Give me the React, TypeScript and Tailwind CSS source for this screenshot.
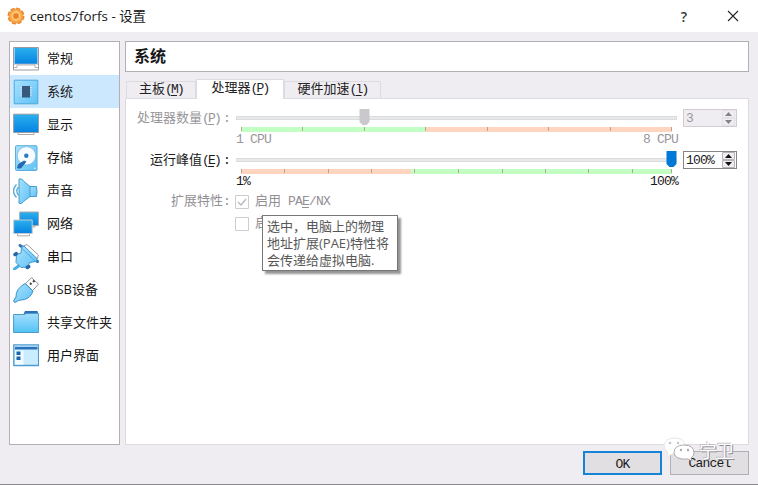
import React from 'react';

const UI = "font-['Open_Sans','Noto_Sans_CJK_SC',sans-serif]";
const MONO = "font-['Liberation_Mono','Noto_Sans_CJK_SC',monospace]";

function Defs() {
  return (
    <svg className="absolute h-0 w-0">
      <defs>
        <linearGradient id="screen" x1="0" y1="0" x2="0" y2="1">
          <stop offset="0" stopColor="#2bb0ee" />
          <stop offset="1" stopColor="#0583e2" />
        </linearGradient>
        <linearGradient id="pale" x1="0" y1="0" x2="1" y2="1">
          <stop offset="0" stopColor="#a8e1fd" />
          <stop offset="1" stopColor="#5fc2f6" />
        </linearGradient>
        <linearGradient id="folder" x1="0" y1="0" x2="0" y2="1">
          <stop offset="0" stopColor="#a5dffc" />
          <stop offset="1" stopColor="#52c3f5" />
        </linearGradient>
      </defs>
    </svg>
  );
}

const icons: Record<string, React.ReactNode> = {
  general: (
    <>
      <path d="M.5 1.5h25v22.5H.5z" fill="#fff" stroke="#9b9a9f" />
      <path d="M1.5 2h23v16h-23z" fill="url(#screen)" />
      <path d="M1 18.2h24" stroke="#c4c2c6" />
      <path d="M1 21.5h3v-2.5h18v2.5h3" fill="none" stroke="#b5b3b7" />
    </>
  ),
  system: (
    <>
      <path d="M1.2 1.2h23.6v23.6H1.2z" fill="url(#pale)" stroke="#4ba9dd" />
      <path d="M7 8.5h12M7 11h12M7 13.5h12M7 16h12" stroke="#d0e0ea" />
      <path d="M9 7h8v11.5H9z" fill="#39597c" />
    </>
  ),
  display: (
    <>
      <path d="M5 20.5h16v2H5z" fill="#fff" stroke="#aaa" />
      <path d="M.6 2.2h25v18.3H.6z" fill="url(#screen)" stroke="#9b9ba0" />
    </>
  ),
  storage: (
    <>
      <rect x="2.5" y=".7" width="21.5" height="24.8" rx="1" fill="url(#pale)" stroke="#5caddb" />
      <circle cx="13.5" cy="10.8" r="9.2" fill="#f8fcff" stroke="#7fbce0" strokeWidth=".8" />
      <circle cx="13.3" cy="10.8" r="2.2" fill="#277bc2" />
      <path d="m4.5 23 1-3.5 5.5-3.5 1.8.8-5 6.2z" fill="#226ab0" stroke="#226ab0" strokeLinejoin="round" />
      <circle cx="22" cy="23.3" r=".8" fill="#fff" />
    </>
  ),
  audio: (
    <>
      <path d="M3.5 6.5q-6 6.5 0 13M5.5 9q-3.5 4 0 8.5" fill="none" stroke="#56a9d8" strokeWidth="1.3" />
      <path d="M16 8.5h7.5q1 5 0 10H16z" fill="url(#pale)" stroke="#479dcd" />
      <path d="M6 1q3-1 4.5 2L17 8.5v10l-6.500 5q-1.500 3-4.500 1.800z" fill="url(#pale)" stroke="#479dcd" strokeLinejoin="round" />
    </>
  ),
  network: (
    <>
      <path d="M10 14h12v2H10z" fill="#fff" stroke="#aaa" />
      <path d="M6.700 1h18.800v13.500H6.700z" fill="url(#screen)" stroke="#a8aaad" />
      <path d="M4.500 22.500h12v2.300h-12z" fill="#fff" stroke="#aaa" />
      <path d="M.7 9h18.500v13.500H.7z" fill="url(#screen)" stroke="#c5c9cc" />
    </>
  ),
  serial: (
    <>
      <path d="m10.500 2 3.500-1.500L25.500 11l-1.500 4z" fill="#fff" stroke="#9e9da1" />
      <path d="m7 21-5.500 4" stroke="#4baee8" strokeWidth="3" strokeLinecap="round" />
      <path d="m7 1.500 3 2M22 15.500l2.500 2" stroke="#3579bd" strokeWidth="3" strokeLinecap="round" />
      <path d="M8.500 3.500 11 2l13 12.500-1 3-6.500 1-1.500 4.500-7 .500-5-5 .500-8L8 9z" fill="url(#pale)" stroke="#3e9bd1" strokeLinejoin="round" />
      <path d="m8.500 4 14 13.500" stroke="#4ba8df" />
      <path d="m2 10.500 1.200-.8M14.300 23.500l1.400-1" stroke="#2865a7" strokeWidth="3.500" strokeLinecap="round" />
    </>
  ),
  usb: (
    <>
      <path d="m18.500.7 7 6.500-6 6.500-7-7z" fill="#fff" stroke="#8c8c92" />
      <path d="m17 6 1.500 1.500m1.500-4 1.500 1.500" stroke="#444" strokeWidth="1.800" />
      <path d="m12 6.500 8 7.500q-2.500 7-8.500 8.500-4 .5-6 1L2 25.500q-2-.5-1-2.500l2-3q-.5-8 9-13.500z" fill="url(#pale)" stroke="#3c91c7" />
    </>
  ),
  shared: (
    <>
      <path d="M10 5l2-4h12.500l1 4z" fill="#2b6fba" />
      <path d="M.6 4.500h10.500l2-1h12.500v19H.6z" fill="url(#folder)" stroke="#4b9bc6" />
    </>
  ),
  interface: (
    <>
      <path d="M.8 1.800h24.800v20.700H.8z" fill="#c9edff" stroke="#4f9bd0" strokeWidth="1.300" />
      <path d="M2 3.800h22.500v2.700H2z" fill="#2b72bc" />
      <path d="M2 7.500h8.500v14H2z" fill="#f2fbff" />
      <path d="M3.500 8.500h4v3.500h-4zm0 5h4V17h-4z" fill="#1864ad" />
    </>
  ),
};

const items = [
  ['general', '常规'],
  ['system', '系统'],
  ['display', '显示'],
  ['storage', '存储'],
  ['audio', '声音'],
  ['network', '网络'],
  ['serial', '串口'],
  ['usb', 'USB设备'],
  ['shared', '共享文件夹'],
  ['interface', '用户界面'],
];

function Sidebar() {
  return (
    <nav className={`h-[404px] w-[111px] shrink-0 border border-[#b2b0b5] bg-white text-[13px] text-[#161616] ${UI}`}>
      {items.map(([id, label]) => (
        <div key={id} className={`flex h-[33px] items-center pl-[3px] ${id === 'system' ? 'bg-[#cce8ff]' : ''}`}>
          <svg width="26" height="26" viewBox="0 0 26 26" className="shrink-0">{icons[id]}</svg>
          <span className="ml-[8px] whitespace-nowrap pb-[2px] leading-[20px]">{label}</span>
        </div>
      ))}
    </nav>
  );
}

function Latin({ children }: { children: React.ReactNode }) {
  return <span className="text-[13px] tracking-[-0.8px]">{children}</span>;
}

function Mnemonic({ text, letter }: { text: string; letter: string }) {
  return (
    <span className="whitespace-nowrap">
      {text}
      <span className="text-[13px] tracking-[-1.8px]">(<u className="underline-offset-2">{letter}</u>)</span>
    </span>
  );
}

function Slider({ ticks, split, low, high, value, disabled }: {
  ticks: number[]; split: number; low: string; high: string; value: number; disabled?: boolean;
}) {
  return (
    <div className="relative h-[18px] w-[441px]">
      <div className="pt-[7px]">
        <div className="h-[4px] border border-[#dcdcde] bg-[#e7eaea]" />
      </div>
      <svg className="mx-[5px] mt-[7px] block" width="431" height="5">
        <rect width={split} height="5" fill={low} />
        <rect x={split} width={431 - split} height="5" fill={high} />
        {ticks.map((x) => (
          <rect key={x} x={x} width="1" height="4" fill="#b2a69b" />
        ))}
      </svg>
      <svg className="absolute top-0" style={{ left: value }} width="11" height="17">
        <path d="M.5 0h10v13L7.5 16h-4L.5 13z" fill={disabled ? '#cbc8cd' : '#0078d7'} />
      </svg>
    </div>
  );
}

function Spin({ value, disabled }: { value: string; disabled?: boolean }) {
  return (
    <div className={`flex h-[18px] w-[54px] items-center justify-between border pl-[2px] ${disabled ? 'border-[#d0ccd2] bg-[#f0edf2] text-[#9a989c]' : 'border-[#858388] bg-white text-[#222]'}`}>
      <span className="pt-[2px] text-[13px] leading-[16px] tracking-[-0.8px]">{value}</span>
      <svg width="14" height="16" viewBox="0 0 14 16">
        <path d="M.5.5h12v7H.5zm0 8h12v7H.5z" fill="#f0edf2" stroke={disabled ? '#e4e1e6' : '#b6b4b9'} />
        <path d="m6.500 2 3.500 4h-7zm0 12 3.500-4h-7z" fill={disabled ? '#858388' : '#111'} />
      </svg>
    </div>
  );
}

function Check({ checked }: { checked?: boolean }) {
  return (
    <svg width="14" height="14" className="shrink-0">
      <path d="M.5.5h13v13H.5z" fill="#fff" stroke="#ceccd0" />
      {checked && <path d="m3 7 3 3 5-6" fill="none" stroke="#b9b8bc" strokeWidth="1.3" />}
    </svg>
  );
}

function Tabs() {
  return (
    <div className="flex h-[18px] items-end pl-[1px] text-[13px] leading-[16px] text-[#222]">
      <div className="flex h-[17px] w-[70px] items-center justify-center border border-b-0 border-[#dedbe0] bg-[#f0edf2]">
        <Mnemonic text="主板" letter="M" />
      </div>
      <div className="z-10 mb-[-1px] flex h-[20px] w-[88px] items-center justify-center border border-b-0 border-[#dedbe0] bg-white pb-[1px]">
        <Mnemonic text="处理器" letter="P" />
      </div>
      <div className="flex h-[17px] w-[97px] items-center justify-center border border-b-0 border-[#dedbe0] bg-[#f0edf2]">
        <Mnemonic text="硬件加速" letter="l" />
      </div>
    </div>
  );
}

function Range({ from, to }: { from: string; to: string }) {
  return (
    <div className="mt-[4px] flex justify-between text-[13px] leading-[18px] tracking-[-0.8px]">
      <span>{from}</span>
      <span className="mr-[-1px]">{to}</span>
    </div>
  );
}

function Processor() {
  return (
    <section className="h-[347px] border border-[#dedbe0] bg-white pt-[10px]">
      <div className="flex h-[42px] text-[#98969a]">
        <div className="w-[110px] pl-[11px] pt-[1px] text-[13px] leading-[18px]">
          <Mnemonic text="处理器数量" letter="P" /><span className="ml-[3px]">:</span>
        </div>
        <div className="w-[441px]">
          <Slider ticks={[0, 61, 123, 184, 246, 307, 369, 430]} split={185} low="#c2ffc2" high="#ffd5c0" value={123} disabled />
          <Range from="1 CPU" to="8 CPU" />
        </div>
        <div className="ml-[6px]"><Spin value="3" disabled /></div>
      </div>
      <div className="flex h-[42px] text-[#1a1a1a]">
        <div className="w-[110px] pl-[24px] pt-[1px] text-[13px] leading-[18px]">
          <Mnemonic text="运行峰值" letter="E" /><span className="ml-[3px]">:</span>
        </div>
        <div className="w-[441px]">
          <Slider ticks={[0, 43, 87, 130, 173, 217, 261, 304, 347, 391, 430]} split={170} low="#ffd5c0" high="#c2ffc2" value={430} />
          <Range from="1%" to="100%" />
        </div>
        <div className="ml-[6px]"><Spin value="100%" /></div>
      </div>
      <div className="relative text-[13px] text-[#929094]">
        <div className="flex h-[18px] items-center">
          <span className="w-[109px] pl-[45px] leading-[18px]">扩展特性<Latin>:</Latin></span>
          <Check checked />
          <span className="ml-[6px] whitespace-nowrap leading-[18px]">启用<Latin> PA<u className="underline-offset-2">E</u>/NX</Latin></span>
        </div>
        <div className="flex h-[26px] items-center pl-[109px]">
          <Check />
          <span className="ml-[6px] leading-[18px]">启用</span>
        </div>
        <div className={`absolute left-[136px] top-[22px] h-[56px] w-[136px] border border-[#777] bg-white pl-[4px] pt-[2px] text-[13px] leading-[17px] text-[#575757] shadow-[3px_3px_2px_rgba(0,0,0,.42)] ${UI}`}>
          <div className="whitespace-nowrap">选中，电脑上的物理</div>
          <div className="whitespace-nowrap">地址扩展(PAE)特性将</div>
          <div className="whitespace-nowrap">会传递给虚拟电脑.</div>
        </div>
      </div>
    </section>
  );
}

function Watermark() {
  return (
    <div className="absolute left-[80px] top-[-14px] flex items-center">
      <svg width="32" height="26" viewBox="0 0 32 26">
        <path d="m5 15-1 5 5-3q13 0 13-9Q21 1 12 1T1 8q0 5 4 7z" fill="#fff" stroke="#e7e5e8" />
        <path d="M21 8q10 0 10 8 0 3-3 5l1 3-4-2q-13 1-14-6 0-8 10-8z" fill="#fff" stroke="#9a979c" strokeWidth=".8" />
        <circle cx="7" cy="6" r="1.3" fill="#c7c4c8" /><circle cx="15" cy="6" r="1.3" fill="#c7c4c8" />
        <circle cx="18" cy="13" r="1.2" fill="#aaa7ad" /><circle cx="25" cy="13" r="1.2" fill="#aaa7ad" />
      </svg>
      <span className={`ml-[4px] pt-[2px] text-[18px] leading-[24px] text-white [text-shadow:1px_1px_0px_#8f8c92,-1px_-1px_0px_#c4c1c6] ${UI}`}>宁卫</span>
    </div>
  );
}

export default function App() {
  return (
    <div className={`flex h-[485px] w-[758px] flex-col overflow-hidden border-b border-[#8a888c] bg-[#f0edf2] ${MONO}`}>
      <Defs />
      <header className={`flex h-[32px] shrink-0 items-center bg-white pl-[7px] ${UI}`}>
        <svg width="18" height="18" viewBox="0 0 18 18">
          <circle cx="9" cy="9" r="7.500" fill="#f5a13c" stroke="#e98532" strokeWidth="2" strokeDasharray="4.200 1.690" />
          <circle cx="9" cy="9" r="7" fill="#f9a545" />
          <circle cx="9" cy="9" r="4" fill="#f4973a" stroke="#ffd590" strokeWidth="1.300" />
          <circle cx="9" cy="9" r="2" fill="#ec7a28" />
        </svg>
        <span className="ml-[5px] text-[13.400px] text-[#171717]">centos7forfs - 设置</span>
        <span className="ml-auto mr-[40px] text-[14px] font-semibold text-[#333]">?</span>
        <svg className="mr-[19px]" width="12" height="12"><path d="m1 1 10 10M11 1 1 11" stroke="#252525" strokeWidth="1.1" /></svg>
      </header>
      <div className="flex h-[404px] shrink-0 gap-[5px] pl-[9px] pt-[9px] box-content">
        <Sidebar />
        <main className="w-[624px]">
          <h1 className="flex h-[31px] items-center border border-[#b2b0b5] bg-white pl-[8px] font-['Liberation_Serif','Noto_Sans_CJK_SC',serif] text-[16px] font-bold text-[#171717]">系统</h1>
          <div className="h-[8px]" />
          <Tabs />
          <Processor />
        </main>
      </div>
      <footer className="flex justify-end pr-[9px] pt-[6px]">
        <div className="relative flex gap-[8px] font-['Liberation_Mono',monospace] text-[13px] tracking-[-0.8px] text-[#1a1a1a]">
          <button className="h-[24px] w-[79px] border-2 border-[#1683d4] bg-[#e1dfe2] pt-[2px]">OK</button>
          <button className="h-[24px] w-[79px] border border-[#b1afb3] bg-[#e1dfe2] pt-[2px]">Cancel</button>
          <Watermark />
        </div>
      </footer>
    </div>
  );
}
